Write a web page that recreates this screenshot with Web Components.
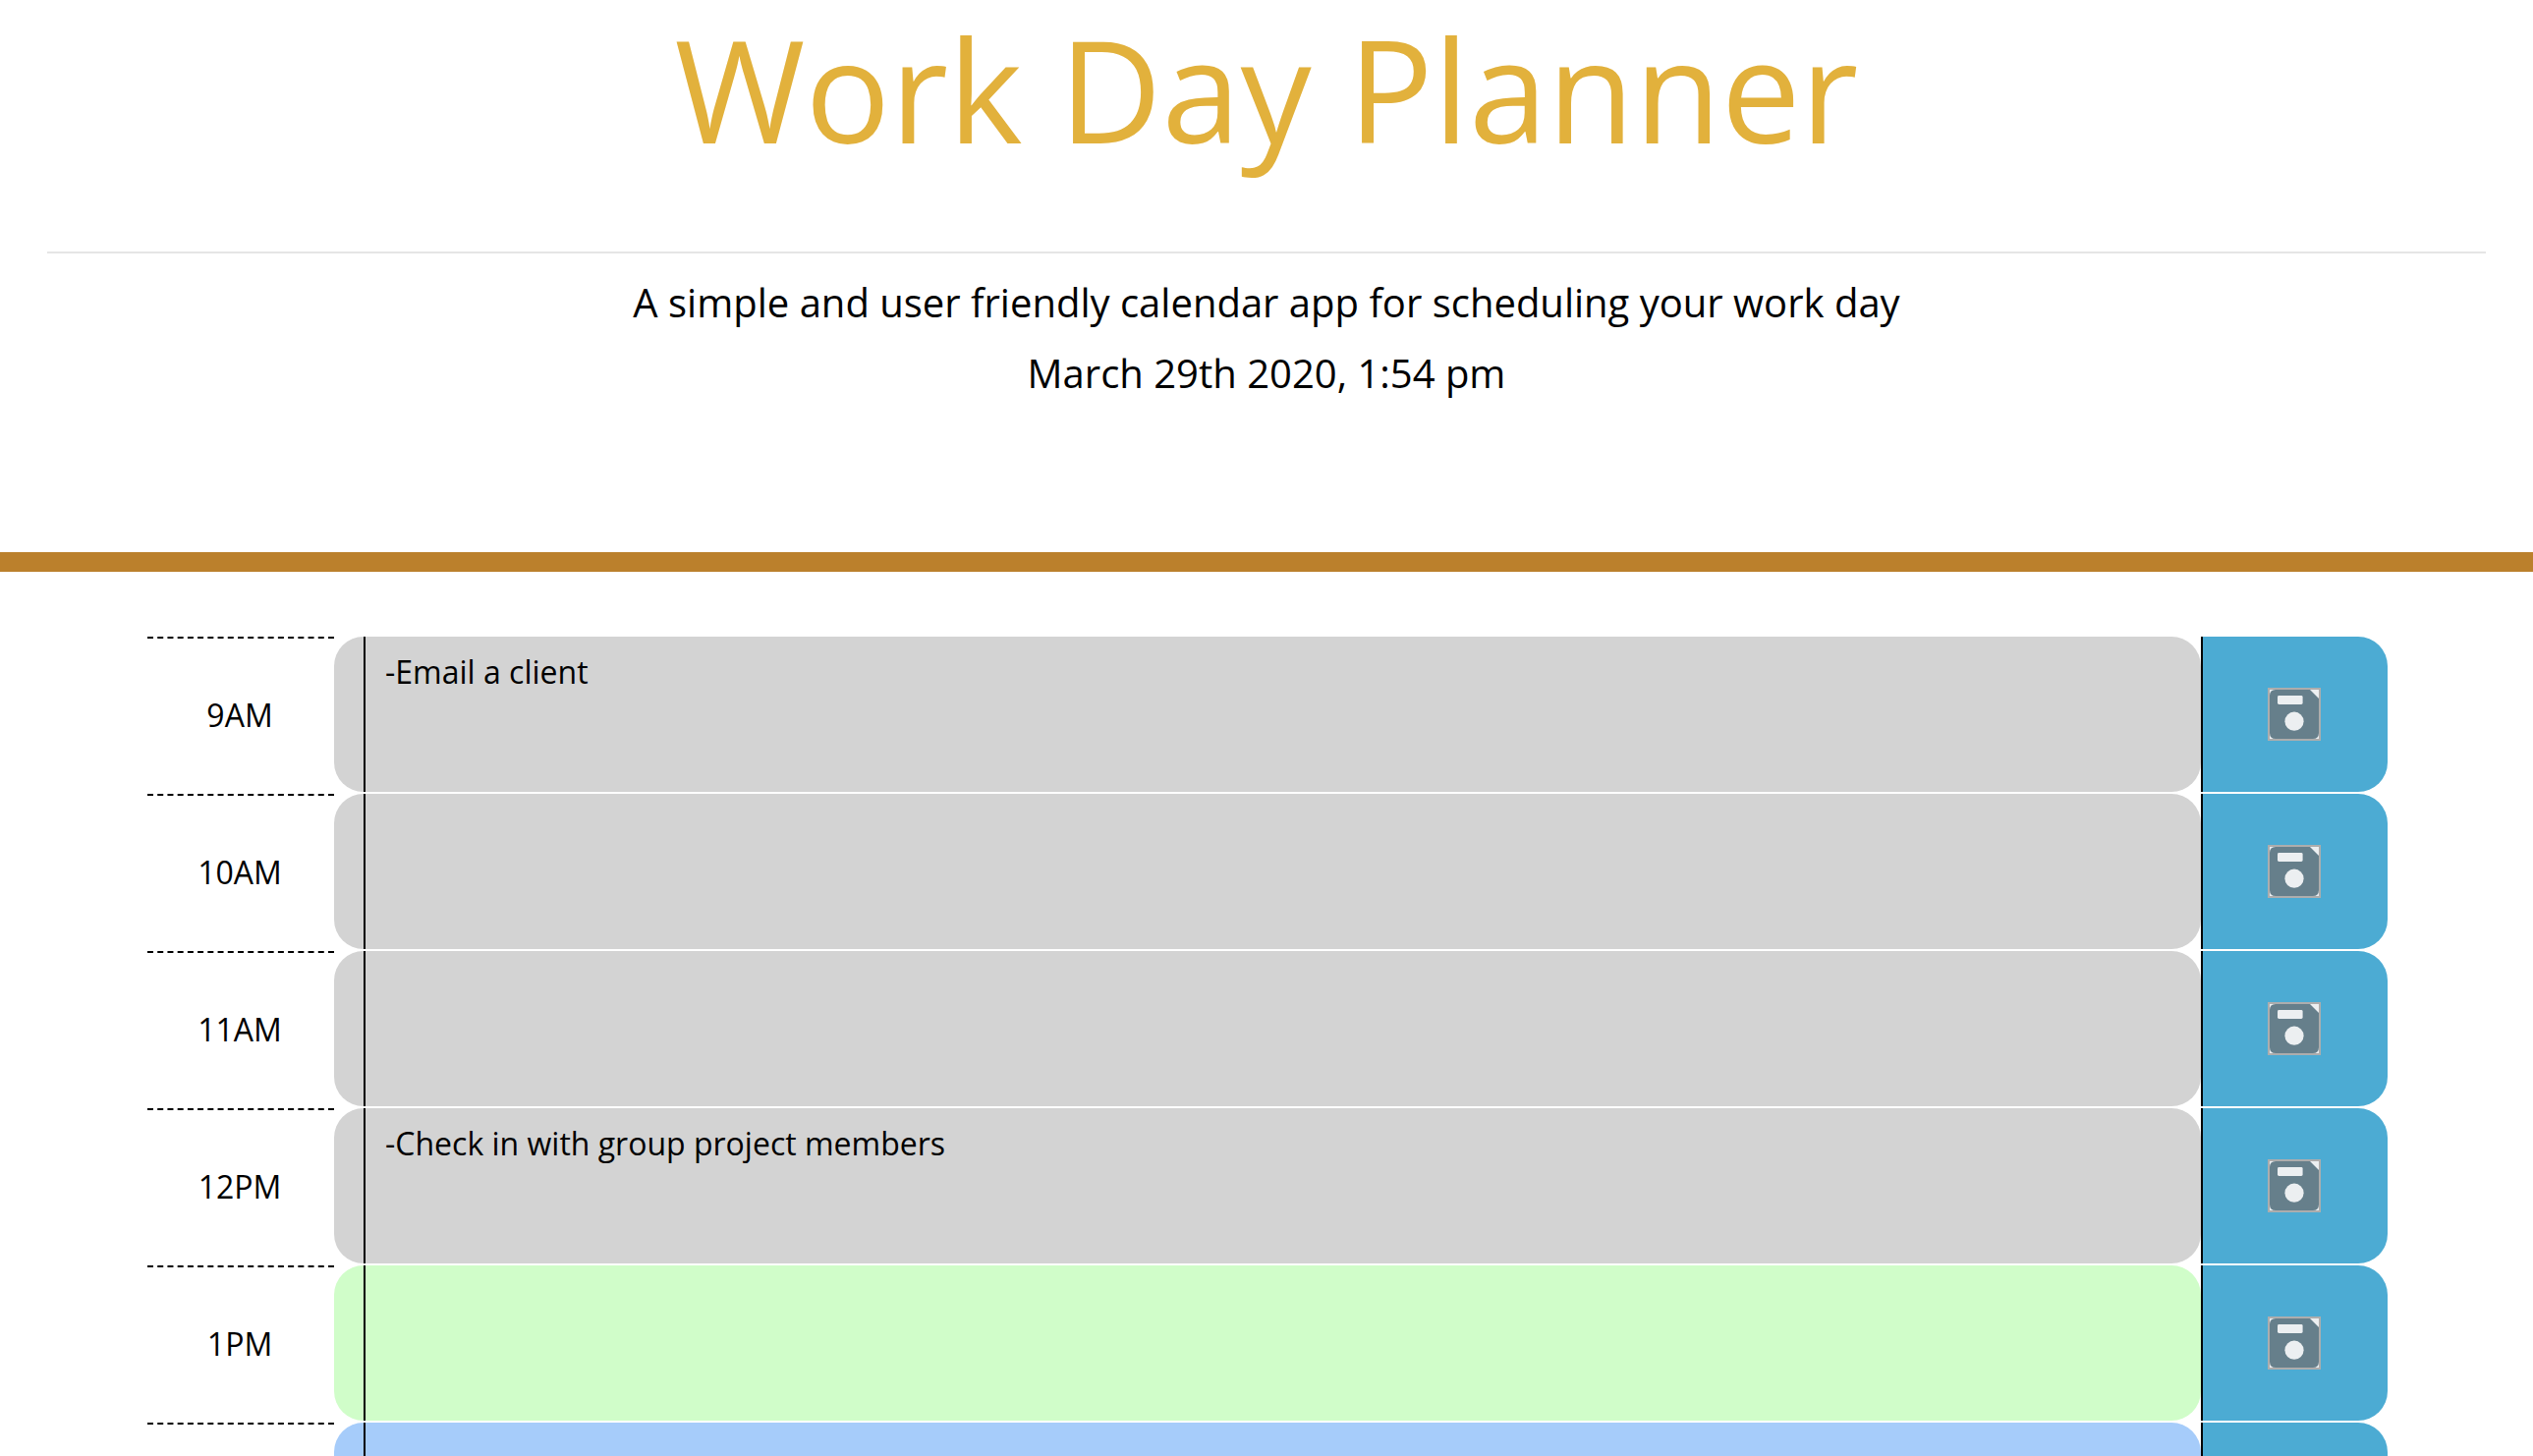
<!DOCTYPE html>
<html lang="en">
<head>
<meta charset="utf-8">
<meta name="viewport" content="width=device-width, initial-scale=1">
<title>Work Day Planner</title>
<style>
  html { height: 100%; overflow: hidden; }
  body {
    margin: 0;
    height: 100%;
    overflow-y: auto;
    scrollbar-width: none;
    background: #fff;
    color: #000;
    font-family: "Open Sans", sans-serif;
    font-size: 32px;
    line-height: 48px;
  }
</style>
</head>
<body>
<planner-header>
  <span slot="title">Work Day Planner</span>
  <span slot="lead">A simple and user friendly calendar app for scheduling your work day</span>
  <time slot="date" datetime="2020-03-29T13:54">March 29th 2020, 1:54 pm</time>
</planner-header>
<planner-schedule>
  <time-block hour="9AM" state="past">-Email a client</time-block>
  <time-block hour="10AM" state="past"></time-block>
  <time-block hour="11AM" state="past"></time-block>
  <time-block hour="12PM" state="past">-Check in with group project members</time-block>
  <time-block hour="1PM" state="present"></time-block>
  <time-block hour="2PM" state="future"></time-block>
</planner-schedule>

<template id="header-template">
  <style>
    :host {
      display: block;
      padding: 4px 48px 152px;
      border-bottom: 20px solid #bb802c;
      text-align: center;
    }
    h1 {
      margin: 0 0 80px;
      color: #e2b13c;
      font-size: 144px;
      font-weight: 400;
      line-height: 172px;
    }
    hr { margin: 0 0 20px; border: 0; border-top: 2px solid #e5e5e5; }
    p { margin: 0; font-size: 40px; line-height: 60px; }
    p + p { margin-top: 12px; }
  </style>
  <h1><slot name="title"></slot></h1>
  <hr>
  <p><slot name="lead"></slot></p>
  <p><slot name="date"></slot></p>
</template>

<template id="schedule-template">
  <style>
    :host { display: flex; flex-direction: column; padding: 66px 148px 0 150px; }
  </style>
  <slot></slot>
</template>

<template id="save-template">
  <style>
    :host { display: grid; }
    button {
      display: grid;
      place-items: center;
      margin: 0;
      padding: 0 2px 0 0;
      border: 0;
      border-left: 2px solid #000;
      border-radius: 0 30px 30px 0;
      background: #4cabd3;
      cursor: pointer;
    }
    svg { display: block; width: 54px; height: 54px; }
  </style>
  <button type="button">
    <svg viewBox="0 0 54 54" aria-hidden="true">
      <rect width="54" height="54" fill="#adadad"/>
      <rect x="2" y="2" width="50" height="50" fill="#eceff1"/>
      <path d="M8 2H43L52 11V46Q52 52 46 52H8Q2 52 2 46V8Q2 2 8 2Z" fill="#667f8b"/>
      <rect x="10" y="8" width="25.6" height="9" rx="1.4" fill="#eceff1"/>
      <circle cx="27" cy="34.2" r="9.6" fill="#eceff1"/>
    </svg>
  </button>
</template>

<template id="block-template">
  <style>
    :host {
      --fill: #d3d3d3;
      display: grid;
      grid-template-columns: 1fr 10fr 1fr;
      height: 158px;
      margin-bottom: 2px;
      flex: none;
    }
    :host([state="present"]) { --fill: #d0fdc9; }
    :host([state="future"]) { --fill: #a6ccfa; }
    label {
      display: grid;
      place-items: center;
      padding-right: 2px;
      border-top: 2px dashed #000;
    }
    .entry {
      display: grid;
      padding-left: 30px;
      border-radius: 30px;
      background: var(--fill);
    }
    textarea {
      box-sizing: border-box;
      width: 100%;
      height: 100%;
      margin: 0;
      padding: 12px 20px;
      border: 0;
      border-left: 2px solid #000;
      outline: 0;
      background: transparent;
      color: inherit;
      font: inherit;
      resize: none;
      overflow: auto;
    }
  </style>
  <label for="entry"></label>
  <div class="entry"><textarea id="entry"></textarea></div>
  <save-button></save-button>
</template>

<script>
  class PlannerElement extends HTMLElement {
    constructor() {
      super();
      const template = document.getElementById(this.constructor.template);
      this.attachShadow({ mode: "open" }).append(template.content.cloneNode(true));
    }
  }

  class PlannerHeader extends PlannerElement {
    static template = "header-template";
  }

  class PlannerSchedule extends PlannerElement {
    static template = "schedule-template";
  }

  class SaveButton extends PlannerElement {
    static template = "save-template";
    static observedAttributes = ["hour"];
    attributeChangedCallback(name, before, hour) {
      this.shadowRoot.querySelector("button").setAttribute("aria-label", "Save " + hour);
    }
  }

  class TimeBlock extends PlannerElement {
    static template = "block-template";
    connectedCallback() {
      const hour = this.getAttribute("hour");
      this.shadowRoot.querySelector("label").textContent = hour;
      this.shadowRoot.querySelector("textarea").value = this.textContent.trim();
      this.shadowRoot.querySelector("save-button").setAttribute("hour", hour);
    }
  }

  customElements.define("planner-header", PlannerHeader);
  customElements.define("planner-schedule", PlannerSchedule);
  customElements.define("save-button", SaveButton);
  customElements.define("time-block", TimeBlock);
</script>
</body>
</html>
